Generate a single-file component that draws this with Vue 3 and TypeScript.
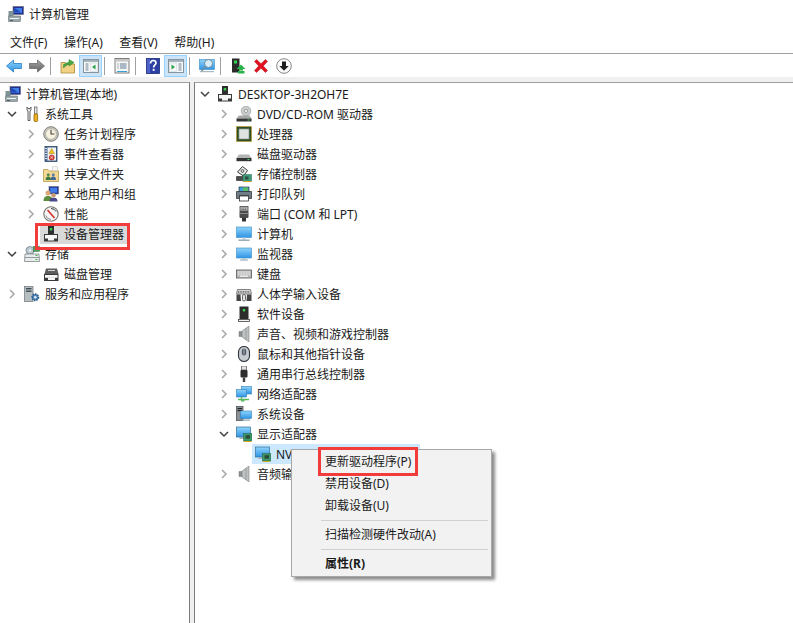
<script setup lang="ts">
interface Row {
  label: string
  icon: string
  level: number
  arrow?: 'right' | 'down'
  selected?: boolean
  active?: boolean
}

const menus: string[] = ['文件(F)', '操作(A)', '查看(V)', '帮助(H)']

const tools: { icon?: string; on?: boolean; sep?: boolean }[] = [
  { icon: 'tb-back' },
  { icon: 'tb-forward' },
  { sep: true },
  { icon: 'tb-up' },
  { icon: 'tb-left', on: true },
  { sep: true },
  { icon: 'tb-props' },
  { sep: true },
  { icon: 'tb-help' },
  { icon: 'tb-right', on: true },
  { sep: true },
  { icon: 'tb-scan' },
  { sep: true },
  { icon: 'tb-update' },
  { icon: 'tb-remove' },
  { icon: 'tb-down' },
]

const leftRows: Row[] = [
  { label: '计算机管理(本地)', icon: 'i-comp', level: 0 },
  { label: '系统工具', icon: 'i-tools', level: 1, arrow: 'down' },
  { label: '任务计划程序', icon: 'i-clock', level: 2, arrow: 'right' },
  { label: '事件查看器', icon: 'i-event', level: 2, arrow: 'right' },
  { label: '共享文件夹', icon: 'i-share', level: 2, arrow: 'right' },
  { label: '本地用户和组', icon: 'i-users', level: 2, arrow: 'right' },
  { label: '性能', icon: 'i-perf', level: 2, arrow: 'right' },
  { label: '设备管理器', icon: 'i-dev', level: 2, selected: true },
  { label: '存储', icon: 'i-storage', level: 1, arrow: 'down' },
  { label: '磁盘管理', icon: 'i-disk', level: 2 },
  { label: '服务和应用程序', icon: 'i-services', level: 1, arrow: 'right' },
]

const rightRows: Row[] = [
  { label: 'DESKTOP-3H2OH7E', icon: 'i-dev', level: 1, arrow: 'down' },
  { label: 'DVD/CD-ROM 驱动器', icon: 'i-dvd', level: 2, arrow: 'right' },
  { label: '处理器', icon: 'i-cpu', level: 2, arrow: 'right' },
  { label: '磁盘驱动器', icon: 'i-hdd', level: 2, arrow: 'right' },
  { label: '存储控制器', icon: 'i-ctl', level: 2, arrow: 'right' },
  { label: '打印队列', icon: 'i-print', level: 2, arrow: 'right' },
  { label: '端口 (COM 和 LPT)', icon: 'i-port', level: 2, arrow: 'right' },
  { label: '计算机', icon: 'i-pc', level: 2, arrow: 'right' },
  { label: '监视器', icon: 'i-monitor', level: 2, arrow: 'right' },
  { label: '键盘', icon: 'i-kbd', level: 2, arrow: 'right' },
  { label: '人体学输入设备', icon: 'i-hid', level: 2, arrow: 'right' },
  { label: '软件设备', icon: 'i-soft', level: 2, arrow: 'right' },
  { label: '声音、视频和游戏控制器', icon: 'i-sound', level: 2, arrow: 'right' },
  { label: '鼠标和其他指针设备', icon: 'i-mouse', level: 2, arrow: 'right' },
  { label: '通用串行总线控制器', icon: 'i-usb', level: 2, arrow: 'right' },
  { label: '网络适配器', icon: 'i-net', level: 2, arrow: 'right' },
  { label: '系统设备', icon: 'i-sys', level: 2, arrow: 'right' },
  { label: '显示适配器', icon: 'i-display', level: 2, arrow: 'down' },
  { label: 'NV', icon: 'i-display', level: 3, active: true },
  { label: '音频输', icon: 'i-sound', level: 2, arrow: 'right' },
]

const panes: { cls: string; rows: Row[] }[] = [
  { cls: 'left', rows: leftRows },
  { cls: 'right', rows: rightRows },
]

const menuItems: { label?: string; sep?: boolean; bold?: boolean }[] = [
  { label: '更新驱动程序(P)' },
  { label: '禁用设备(D)' },
  { label: '卸载设备(U)' },
  { sep: true },
  { label: '扫描检测硬件改动(A)' },
  { sep: true },
  { label: '属性(R)', bold: true },
]
</script>

<template>
  <div class="win">
    <svg class="defs" width="0" height="0" aria-hidden="true">
      <defs>
        <linearGradient id="g-blue" x1="0" y1="0" x2="0" y2="1">
          <stop offset="0" stop-color="#8fd4fb" />
          <stop offset="1" stop-color="#2f94e6" />
        </linearGradient>
        <linearGradient id="g-gray" x1="0" y1="0" x2="0" y2="1">
          <stop offset="0" stop-color="#a8a8a8" />
          <stop offset="1" stop-color="#5e5e5e" />
        </linearGradient>
      </defs>

      <symbol id="i-comp" viewBox="0 0 16 16">
        <rect x="5" y="0.5" width="10.5" height="8" fill="#1d2f92" stroke="#667" stroke-width=".6" />
        <rect x="6.5" y="2" width="7.5" height="5" fill="#3f7fe6" />
        <path d="M7 2l6 4.5H7z" fill="#2148b8" />
        <rect x="0.5" y="5" width="5" height="5.5" fill="#7f9498" />
        <rect x="0.5" y="10" width="12" height="5.5" fill="#9aa7aa" stroke="#6a7577" stroke-width=".6" />
        <rect x="2" y="12" width="9" height="1" fill="#eef2f2" />
        <rect x="2" y="14" width="3" height="1" fill="#4f5a5c" />
      </symbol>
      <symbol id="i-tools" viewBox="0 0 16 16">
        <path d="M3 1v3l1 1v9.500h2V5l1-1V1L6 2.500H4z" fill="#e9e9e9" stroke="#555" stroke-width=".9" />
        <rect x="10.500" y="1" width="2.500" height="7" fill="#e6e6e6" stroke="#666" stroke-width=".8" />
        <rect x="10" y="8" width="3.600" height="7.500" rx="1" fill="#f0b21f" stroke="#8b6207" stroke-width=".8" />
      </symbol>
      <symbol id="i-clock" viewBox="0 0 16 16">
        <circle cx="8" cy="8" r="7.300" fill="#c9c9c2" stroke="#7e7e78" />
        <circle cx="8" cy="8" r="5.400" fill="#f7f2df" stroke="#9a9a90" stroke-width=".6" />
        <path d="M8 3.700V8h3.400" fill="none" stroke="#45423a" stroke-width="1.100" />
      </symbol>
      <symbol id="i-event" viewBox="0 0 16 16">
        <rect x="2" y="0.500" width="12" height="15" fill="#4a6b96" stroke="#2e4566" stroke-width=".8" />
        <rect x="4.500" y="1.500" width="8.500" height="13" fill="#f3f3ef" />
        <path d="M2 2.500h2M2 5h2M2 7.500h2M2 10h2M2 12.500h2" stroke="#dfe6ee" />
        <path d="M8.700 2.500l2.700 5H6z" fill="#f2c21f" stroke="#a98309" stroke-width=".5" />
        <circle cx="8.700" cy="11.500" r="2.600" fill="#d93b3b" stroke="#932020" stroke-width=".5" />
        <path d="M7.500 10.500l2.400 2M9.900 10.500l-2.400 2" stroke="#fff" stroke-width=".7" />
      </symbol>
      <symbol id="i-share" viewBox="0 0 16 16">
        <path d="M.5 3.500h4.500l1.500 1.500h9v10.500H.5z" fill="#f1d993" stroke="#b59a4d" stroke-width=".8" />
        <rect x="9.500" y="0.800" width="5" height="4" fill="#f8f8f0" stroke="#bbb" stroke-width=".5" />
        <circle cx="5.300" cy="8.800" r="1.500" fill="#5c8a54" />
        <path d="M2.600 14c0-2.400 1.200-3.400 2.700-3.400S8 11.600 8 14z" fill="#3e7a3f" />
        <circle cx="10.300" cy="8.800" r="1.500" fill="#5c7ea8" />
        <path d="M7.600 14c0-2.400 1.200-3.400 2.700-3.400s2.700 1 2.700 3.400z" fill="#3f6695" />
      </symbol>
      <symbol id="i-users" viewBox="0 0 16 16">
        <rect x="6" y="0.500" width="9.500" height="7.500" fill="#1d2f92" stroke="#667" stroke-width=".6" />
        <rect x="7.200" y="1.700" width="7" height="5" fill="#3f7fe6" />
        <circle cx="5" cy="7" r="2.500" fill="#d9a778" />
        <path d="M.5 15c0-4 2-5 4.500-5s4.500 1 4.500 5z" fill="#5d8d3e" />
        <circle cx="10.500" cy="9.300" r="2.200" fill="#c99a6f" />
        <path d="M6.500 15.500c0-3.200 1.600-3.800 4-3.800s4 .6 4 3.800z" fill="#4a4a8a" />
      </symbol>
      <symbol id="i-perf" viewBox="0 0 16 16">
        <circle cx="8" cy="8" r="7.200" fill="#f5f5f5" stroke="#77756f" stroke-width="1.100" />
        <path d="M4.500 4l7 8" stroke="#d93030" stroke-width="1.600" />
        <path d="M8 2.500a5.500 5.500 0 0 1 5 3" fill="none" stroke="#3a3a3a" stroke-width="1" />
        <path d="M2.800 9.500A5.500 5.500 0 0 0 8 13.500" fill="none" stroke="#8a8a8a" stroke-width="1" />
      </symbol>
      <symbol id="i-dev" viewBox="0 0 16 16">
        <rect x="5" y="0" width="6" height="8" fill="#2e2e2e" />
        <rect x="6.800" y="2" width="2.400" height="2.400" fill="#3bd24f" />
        <rect x="1" y="8" width="14" height="7.500" fill="#3a3a3a" />
        <rect x="2" y="9" width="12" height="3.500" fill="#f6f6f6" />
        <rect x="5" y="12" width="6" height="2.500" fill="#f6f6f6" />
      </symbol>
      <symbol id="i-storage" viewBox="0 0 16 16">
        <circle cx="6" cy="4.500" r="4" fill="#b9c8cf" stroke="#6c7c84" stroke-width=".7" />
        <circle cx="6" cy="4.500" r="1.200" fill="#eef4f6" />
        <rect x="9.500" y="0.500" width="6" height="5" fill="#4da260" stroke="#2f6a3c" stroke-width=".5" />
        <path d="M1 8h14l.5 7.500H.500z" fill="#e9eced" stroke="#70777a" stroke-width=".7" />
        <path d="M.8 11.500h14.400" stroke="#70777a" stroke-width=".7" />
        <rect x="11.500" y="9" width="2" height="1" fill="#3cba4d" />
        <rect x="11.500" y="13" width="2" height="1" fill="#3cba4d" />
      </symbol>
      <symbol id="i-disk" viewBox="0 0 16 16">
        <path d="M3 2.500h11l1.500 5.500H1.500z" fill="#5c5c5c" />
        <path d="M5 4.500h7" stroke="#d5d5d5" />
        <rect x="1" y="8" width="14.500" height="7" fill="#3a3a3a" />
        <rect x="2" y="9" width="12.500" height="2.800" fill="#f6f6f6" />
        <rect x="5" y="11.500" width="7" height="2.500" fill="#f6f6f6" />
      </symbol>
      <symbol id="i-services" viewBox="0 0 16 16">
        <rect x="0.500" y="0.500" width="8.500" height="15" fill="#b7bec2" stroke="#6c7478" stroke-width=".7" />
        <rect x="2" y="2" width="5.500" height="1.400" fill="#3d4b52" />
        <rect x="2" y="4.500" width="5.500" height="1.400" fill="#3d4b52" />
        <circle cx="11.300" cy="11.300" r="3.200" fill="#4f84b8" stroke="#2c5a88" stroke-width="1.600" stroke-dasharray="1.400 1" />
        <circle cx="11.300" cy="11.300" r="1.200" fill="#e6f0f8" />
      </symbol>
      <symbol id="i-dvd" viewBox="0 0 16 16">
        <circle cx="10" cy="5" r="4.800" fill="#c9cdcd" stroke="#8e9494" stroke-width=".6" />
        <circle cx="10" cy="5" r="1.600" fill="#f5f5f5" stroke="#777" stroke-width=".6" />
        <path d="M3 9.500h10.500l2 3H.5z" fill="#a8a8a8" />
        <rect x="0.500" y="12.500" width="15" height="3" fill="#343434" />
        <rect x="11.500" y="13.500" width="2" height="1" fill="#3fd45a" />
      </symbol>
      <symbol id="i-cpu" viewBox="0 0 16 16">
        <rect x="0.500" y="0.500" width="15" height="15" fill="#2f4c26" stroke="#c29c22" stroke-width="1" stroke-dasharray="1 .7" />
        <rect x="3" y="3" width="10" height="10" fill="#dfe4e0" stroke="#8a9890" stroke-width=".7" />
      </symbol>
      <symbol id="i-hdd" viewBox="0 0 16 16">
        <path d="M3 8.500h10l2.500 3.500H.5z" fill="#b4b4b4" />
        <rect x="0.500" y="12" width="15" height="3.200" fill="#343434" />
        <rect x="11.500" y="13" width="2" height="1" fill="#3fd45a" />
      </symbol>
      <symbol id="i-ctl" viewBox="0 0 16 16">
        <path d="M1.500 6l5-5.500 5 4-4 5.500z" fill="#f1f1f1" stroke="#333" stroke-width="1" />
        <circle cx="6.500" cy="5" r="1.500" fill="#ccc" stroke="#333" stroke-width=".7" />
        <path d="M.5 10.500h7v4h-7z" fill="#4a4a4a" stroke="#333" stroke-width=".7" />
        <rect x="7" y="8.500" width="8.500" height="7" fill="#3f9b7a" stroke="#246a50" stroke-width=".5" />
        <rect x="9" y="10.500" width="3.500" height="3" fill="#2d4e44" />
        <path d="M7.500 15.500h7.500" stroke="#d1a826" />
      </symbol>
      <symbol id="i-print" viewBox="0 0 16 16">
        <rect x="3" y="1" width="10" height="5" fill="#3aa3dd" stroke="#333" stroke-width=".7" />
        <path d="M7 1.500h5v3.500H7z" fill="#5ac06a" />
        <path d="M.5 5.500h15v7h-3v-3h-9v3h-3z" fill="#6f7d86" stroke="#333" stroke-width=".8" />
        <rect x="3.500" y="10" width="9" height="5" fill="#fff" stroke="#333" stroke-width=".8" />
      </symbol>
      <symbol id="i-port" viewBox="0 0 16 16">
        <rect x="4" y="0.500" width="8" height="4.500" fill="#bdbdbd" stroke="#4c4c4c" stroke-width=".8" />
        <path d="M5.500 2h5M5.500 3.500h5" stroke="#444" stroke-dasharray="1 .8" stroke-width=".8" />
        <rect x="3.500" y="5" width="9" height="7" rx="1" fill="#4b4b4b" />
        <path d="M4 7.500h8" stroke="#8c8c8c" />
        <rect x="6" y="12" width="4" height="3.500" fill="#333" />
      </symbol>
      <symbol id="i-pc" viewBox="0 0 16 16">
        <rect x="0.500" y="1" width="15" height="10.500" fill="url(#g-blue)" stroke="#3b8cc8" stroke-width=".6" />
        <rect x="6.500" y="11.500" width="3" height="2" fill="#bcd0dc" />
        <rect x="2.500" y="13.500" width="11" height="1.400" fill="#8fa2ae" />
      </symbol>
      <symbol id="i-monitor" viewBox="0 0 16 16">
        <rect x="0.500" y="2" width="15" height="10" fill="url(#g-blue)" stroke="#3b8cc8" stroke-width=".6" />
        <rect x="6.500" y="12" width="3" height="1.500" fill="#b7c7d2" />
        <rect x="4" y="13.500" width="8" height="1" fill="#8fa2ae" />
      </symbol>
      <symbol id="i-kbd" viewBox="0 0 16 16">
        <rect x="0.500" y="4" width="15" height="8" fill="#bdbdbd" stroke="#555" stroke-width=".8" />
        <path d="M2 6h12M2 8h12" stroke="#f6f6f6" stroke-dasharray="1 .6" stroke-width="1.200" />
        <path d="M4 10.200h8" stroke="#f6f6f6" stroke-width="1.200" />
      </symbol>
      <symbol id="i-hid" viewBox="0 0 16 16">
        <path d="M1.500 3.500h13l1 4.500H.5z" fill="#d6d6d6" stroke="#555" stroke-width=".7" />
        <path d="M2 5.800h12" stroke="#444" stroke-dasharray="1 .7" stroke-width="1.200" />
        <path d="M.5 8.500h4l.5 6.500H.5z" fill="#444" />
        <path d="M11 8.500h4.500v6.500H10.500z" fill="#444" />
        <rect x="6.500" y="8.500" width="3" height="6.500" rx="1.400" fill="#e5e5e5" stroke="#444" stroke-width=".8" />
      </symbol>
      <symbol id="i-soft" viewBox="0 0 16 16">
        <rect x="3.500" y="0.500" width="9" height="13" fill="#2c2c2c" />
        <rect x="6.800" y="3" width="2.400" height="2.400" fill="#3bd24f" />
        <rect x="2.500" y="13.500" width="11" height="2" fill="#f3f3f3" stroke="#444" stroke-width=".8" />
      </symbol>
      <symbol id="i-sound" viewBox="0 0 16 16">
        <path d="M3 5.500h3V10.500H3z" fill="#8f9292" stroke="#6f7272" stroke-width=".5" />
        <path d="M6 5l7-5v16l-7-5z" fill="#bfc2c2" stroke="#7e8181" stroke-width=".6" />
        <path d="M10 2.500v11" stroke="#8f9292" stroke-width=".8" />
      </symbol>
      <symbol id="i-mouse" viewBox="0 0 16 16">
        <rect x="2.500" y="0.500" width="11" height="15" rx="5.500" fill="#c6ccd2" stroke="#2f353b" stroke-width="1.100" />
        <rect x="5.800" y="2.500" width="4.400" height="7" rx="2.200" fill="#515a63" />
        <path d="M8 2.500v6" stroke="#aab2ba" />
      </symbol>
      <symbol id="i-usb" viewBox="0 0 16 16">
        <rect x="5.500" y="0" width="5" height="4" fill="#e3e3e3" stroke="#555" stroke-width=".7" />
        <rect x="4.500" y="4" width="7" height="7.500" rx="1" fill="#2e2e2e" />
        <rect x="6.800" y="11.500" width="2.400" height="4.500" fill="#3e3e3e" />
      </symbol>
      <symbol id="i-net" viewBox="0 0 16 16">
        <rect x="5.500" y="0.500" width="10" height="7.500" fill="url(#g-blue)" stroke="#2d7fba" stroke-width=".6" />
        <rect x="0.500" y="3.500" width="10" height="7.500" fill="url(#g-blue)" stroke="#2d7fba" stroke-width=".6" />
        <path d="M5.500 11v2M2 13.500h11" stroke="#5cb85c" stroke-width="1.300" />
        <rect x="5" y="13" width="3.500" height="2.500" fill="#5cb85c" />
      </symbol>
      <symbol id="i-sys" viewBox="0 0 16 16">
        <rect x="0.500" y="0.500" width="6.500" height="14" fill="#8a9195" stroke="#444" stroke-width=".7" />
        <rect x="1.500" y="2" width="4.500" height="1.200" fill="#222" />
        <rect x="1.500" y="4" width="4.500" height="1.200" fill="#222" />
        <rect x="4.500" y="5" width="11" height="7.500" fill="url(#g-blue)" stroke="#2d7fba" stroke-width=".6" />
        <rect x="6" y="13.500" width="8" height="1.200" fill="#8fa2ae" />
      </symbol>
      <symbol id="i-display" viewBox="0 0 16 16">
        <rect x="0.500" y="1" width="14" height="10" fill="url(#g-blue)" stroke="#2f6e99" stroke-width=".7" />
        <rect x="3.500" y="11" width="5" height="2" fill="#9eb0bb" />
        <rect x="7.500" y="7.500" width="8.500" height="7.500" fill="#3e9968" stroke="#245f40" stroke-width=".5" />
        <rect x="9.500" y="9.200" width="4.500" height="3.500" fill="#2b4a3a" />
        <path d="M8 15.500h7" stroke="#d1a826" stroke-width="1" />
      </symbol>

      <symbol id="tb-back" viewBox="0.500 0.500 16 15">
        <path d="M1 8l7-6v3.500h8.200v5H8V14z" fill="url(#g-blue)" stroke="#2a7bc0" stroke-width=".8" />
      </symbol>
      <symbol id="tb-forward" viewBox="0.500 0.500 16 15">
        <path d="M16 8L9 2v3.500H.8v5H9V14z" fill="url(#g-gray)" stroke="#6a6a6a" stroke-width=".8" />
      </symbol>
      <symbol id="tb-up" viewBox="0 0 16 16">
        <path d="M1 4.500h4.500L7 6h7.500v9H1z" fill="#f2d184" stroke="#a98a3d" stroke-width=".8" />
        <path d="M3.500 10V6.500L9 4V1.500L14 4.500 9 8V6L5.500 8z" fill="#46a843" stroke="#2f7e2d" stroke-width=".5" />
      </symbol>
      <symbol id="tb-left" viewBox="0 0 16 16">
        <rect x="0.500" y="1.500" width="15" height="13" fill="#f8f8f8" stroke="#7b8a93" stroke-width=".9" />
        <rect x="1" y="2" width="14" height="2" fill="#a3b4bd" />
        <path d="M2.500 6h3M2.500 8h3M2.500 10h3M2.500 12h3" stroke="#6d8392" />
        <rect x="7.500" y="5" width="7" height="8.500" fill="#f5f8f9" stroke="#c6cfd4" stroke-width=".5" />
        <path d="M12.500 6.500v5L9 9z" fill="#2ba24c" />
      </symbol>
      <symbol id="tb-right" viewBox="0 0 16 16">
        <rect x="0.500" y="1.500" width="15" height="13" fill="#f8f8f8" stroke="#7b8a93" stroke-width=".9" />
        <rect x="1" y="2" width="14" height="2" fill="#a3b4bd" />
        <path d="M10.500 6h3M10.500 8h3M10.500 10h3M10.500 12h3" stroke="#6d8392" />
        <rect x="1.500" y="5" width="7" height="8.500" fill="#f5f8f9" stroke="#c6cfd4" stroke-width=".5" />
        <path d="M3.500 6.500v5L7 9z" fill="#2ba24c" />
      </symbol>
      <symbol id="tb-props" viewBox="0 0 16 16">
        <rect x="1" y="0.500" width="14" height="14.500" fill="#f5f5f5" stroke="#707070" stroke-width=".9" />
        <rect x="1.500" y="1" width="13" height="2.500" fill="#c5c5c5" />
        <path d="M3.500 6h1M6 6h6.500M3.500 8h1M6 8h6.500M3.500 10h1M6 10h6.500" stroke="#5e7c94" />
        <path d="M3 13.500h10" stroke="#32a1dd" stroke-width="1" />
      </symbol>
      <symbol id="tb-help" viewBox="0 0 14 16">
        <rect x="0.500" y="0.500" width="13" height="15" fill="#2b3fa4" stroke="#1b2a78" stroke-width=".8" />
        <rect x="1" y="1" width="3" height="14" fill="#4d62c8" />
        <path d="M4.500 5.500c0-2 1-3 2.800-3s2.700 1 2.700 2.500c0 2-2.400 2-2.400 4.500" fill="none" stroke="#fff" stroke-width="1.700" />
        <rect x="6.700" y="10.800" width="1.900" height="2" fill="#fff" />
      </symbol>
      <symbol id="tb-scan" viewBox="0 0 16 16">
        <rect x="0.500" y="1.500" width="15" height="10" fill="url(#g-blue)" stroke="#3b8cc8" stroke-width=".6" />
        <rect x="1" y="13" width="14" height="1.200" fill="#a7bac6" />
        <circle cx="9.500" cy="5.500" r="4" fill="#d5edf9" stroke="#6e8b9b" stroke-width="1" />
        <path d="M6.500 8.500L2.500 13" stroke="#6e8b9b" stroke-width="1.500" />
      </symbol>
      <symbol id="tb-update" viewBox="0 0 16 16">
        <rect x="2" y="0.500" width="7.500" height="14" fill="#2a2a2a" />
        <rect x="4" y="2.500" width="3" height="3" fill="#3bd24f" />
        <path d="M11 6.500l4.500 4.500h-2.500v1.500H9V11H6.500z" fill="#2bb24a" />
        <path d="M8 13h6.500v2.500H8z" fill="#2bb24a" />
      </symbol>
      <symbol id="tb-remove" viewBox="0 0 16 16">
        <path d="M1.500 3.500L3.500 1.500 8 5.700l4.500-4.200 2 2L10.300 8l4.200 4.500-2 2L8 10.300l-4.500 4.200-2-2L5.700 8z" fill="#e2121e" stroke="#b00d17" stroke-width=".5" />
      </symbol>
      <symbol id="tb-down" viewBox="0 0 16 16">
        <circle cx="8" cy="8" r="7.300" fill="#fbfbfb" stroke="#777" stroke-width=".9" />
        <path d="M6 3.500h4V8h2.700L8 12.700 3.300 8H6z" fill="#1c1c1c" />
      </symbol>
    </svg>

    <header class="title">
      <svg class="title-icon"><use href="#i-comp" /></svg>
      <span>计算机管理</span>
    </header>

    <nav class="menubar">
      <span v-for="m in menus" :key="m">{{ m }}</span>
    </nav>

    <div class="toolbar">
      <template v-for="(t, i) in tools" :key="i">
        <span v-if="t.sep" class="tool-sep"></span>
        <span v-else class="tool" :class="{ on: t.on }">
          <svg class="tool-icon"><use :href="'#' + t.icon" /></svg>
        </span>
      </template>
    </div>

    <main class="panes">
      <section v-for="p in panes" :key="p.cls" class="pane" :class="p.cls">
        <div v-for="r in p.rows" :key="r.label" class="row" :class="'lv' + r.level">
          <span v-if="r.level > 0" class="arrow">
            <svg v-if="r.arrow === 'right'" width="10" height="10" viewBox="0 0 10 10">
              <path d="M3 1l4 4-4 4" fill="none" stroke="#a6a6a6" stroke-width="1.500" />
            </svg>
            <svg v-else-if="r.arrow === 'down'" width="10" height="10" viewBox="0 0 10 10">
              <path d="M1 3l4 4 4-4" fill="none" stroke="#404040" stroke-width="1.500" />
            </svg>
          </span>
          <span class="body" :class="{ selected: r.selected, active: r.active }">
            <svg class="icon"><use :href="'#' + r.icon" /></svg>
            <span class="label">{{ r.label }}</span>
          </span>
        </div>
        <div v-if="p.cls === 'left'" class="mark mark-left"></div>
      </section>
    </main>

    <div class="ctx">
      <template v-for="(m, i) in menuItems" :key="i">
        <div v-if="m.sep" class="ctx-sep"></div>
        <div v-else class="ctx-item" :class="{ bold: m.bold }">{{ m.label }}</div>
      </template>
      <div class="mark mark-menu"></div>
    </div>
  </div>
</template>

<style scoped>
.win {
  position: relative;
  width: 793px;
  height: 623px;
  overflow: hidden;
  display: flex;
  flex-direction: column;
  background: #f0f0f0;
  font-family: "Noto Sans", "Noto Sans CJK SC", sans-serif;
  font-size: 12px;
  color: #1a1a1a;
}
.defs {
  position: absolute;
}
.title {
  height: 30px;
  flex: none;
  display: flex;
  align-items: center;
  gap: 5px;
  padding-left: 8px;
  background: #fff;
  padding-bottom: 2px;
  box-sizing: border-box;
}
.title-icon {
  width: 16px;
  height: 16px;
}
.menubar {
  height: 23px;
  flex: none;
  display: flex;
  align-items: center;
  gap: 16.5px;
  padding-left: 10px;
  background: #fff;
  border-bottom: 1px solid #a0a0a0;
}
.toolbar {
  height: 23px;
  flex: none;
  display: flex;
  align-items: center;
  padding-left: 2px;
  background: #fff;
}
.tool {
  width: 23px;
  height: 22px;
  box-sizing: border-box;
  display: flex;
  align-items: center;
  justify-content: center;
  border: 1px solid transparent;
}
.tool.on {
  background: #cce4f7;
  border-color: #99d1ff;
}
.tool-icon {
  width: 16px;
  height: 16px;
}
.tool-sep {
  width: 1px;
  height: 18px;
  margin: 0 5px 0 2px;
  background: #a0a0a0;
}
.panes {
  flex: 1;
  min-height: 0;
  margin-top: 5px;
  display: flex;
  gap: 4px;
}
.pane {
  position: relative;
  box-sizing: border-box;
  background: #fff;
  border-top: 1px solid #a0a0a0;
  padding-top: 1px;
}
.pane.left {
  width: 190px;
  border-right: 1px solid #7a7a7a;
}
.pane.right {
  flex: 1;
  border-left: 1px solid #7a7a7a;
  padding-left: 1px;
}
.row {
  height: 20px;
  display: flex;
  align-items: center;
}
.left .row.lv0 {
  padding-left: 2px;
}
.left .row.lv1 {
  padding-left: 3px;
}
.left .row.lv2 {
  padding-left: 22px;
}
.right .row.lv1 {
  padding-left: 0;
}
.right .row.lv2 {
  padding-left: 19px;
}
.right .row.lv3 {
  padding-left: 38px;
}
.arrow {
  width: 18px;
  height: 20px;
  flex: none;
  display: flex;
  align-items: center;
  justify-content: center;
}
.body {
  height: 20px;
  display: flex;
  align-items: center;
  gap: 5px;
  padding: 0 3px;
}
.body.selected {
  background: #d9d9d9;
}
.body.active {
  background: #cce8ff;
  width: 168px;
  box-sizing: border-box;
}
.icon {
  width: 16px;
  height: 16px;
  flex: none;
}
.label {
  white-space: nowrap;
}
.mark {
  position: absolute;
  box-sizing: border-box;
  border: 3px solid #f23b3b;
}
.mark-left {
  left: 35px;
  top: 140px;
  width: 95px;
  height: 27px;
}
.ctx {
  position: absolute;
  left: 291px;
  top: 449px;
  width: 201px;
  height: 128px;
  box-sizing: border-box;
  padding-top: 1px;
  background: #f2f2f2;
  border: 1px solid #a8a8a8;
  box-shadow: 3px 3px 3px rgba(0, 0, 0, 0.45);
}
.ctx-item {
  height: 22px;
  line-height: 22px;
  padding-left: 33px;
  white-space: nowrap;
}
.ctx-item.bold {
  font-weight: 700;
}
.ctx-sep {
  height: 1px;
  margin: 3px 3px 3px 29px;
  background: #d0d0d0;
}
.mark-menu {
  left: 26px;
  top: -3px;
  width: 100px;
  height: 29px;
}
</style>
